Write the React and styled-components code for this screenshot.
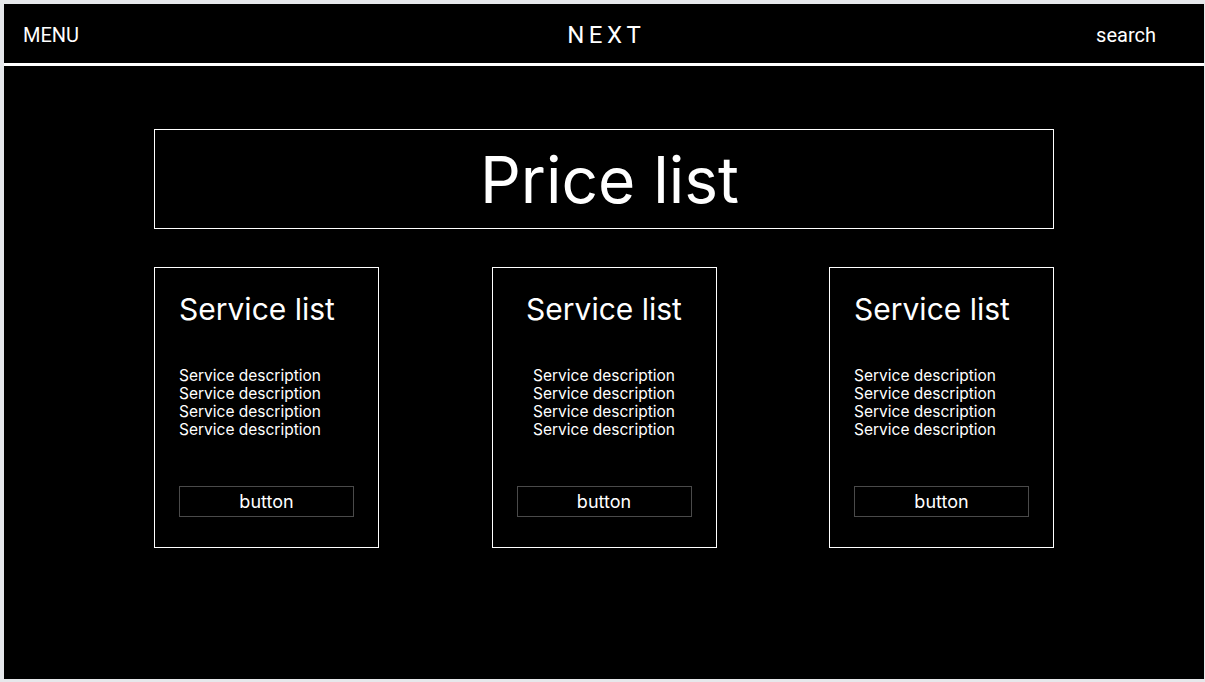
import styled, { createGlobalStyle } from 'styled-components';

const GlobalStyle = createGlobalStyle`
  body {
    margin: 0;
    background: #e6e8eb;
  }
`;

const Frame = styled.div`
  width: 1200px;
  height: 675px;
  margin: 4px 0 0 4px;
  background: #000;
  color: #fff;
  display: flex;
  flex-direction: column;
`;

const Header = styled.header`
  box-sizing: border-box;
  height: 62px;
  border-bottom: 3px solid #fff;
  display: grid;
  grid-template-columns: 1fr auto 1fr;
  align-items: center;
  padding: 3px 19px 0;
  font-family: Roboto, sans-serif;
  font-size: 20px;
`;

const NavLink = styled.a`
  color: #fff;
  text-decoration: none;
  justify-self: ${({ $end }) => ($end ? 'end' : 'start')};
  margin-right: ${({ $end }) => ($end ? '29px' : '0')};
`;

const Logo = styled.div`
  font-size: 24px;
  letter-spacing: 4.5px;
  margin-right: -4.5px;
`;

const Main = styled.main`
  width: 900px;
  margin: 0 auto;
  padding-top: 63px;
  font-family: Inter, sans-serif;
`;

const TitleBox = styled.div`
  height: 98px;
  border: 1px solid #fff;
  padding-left: 11px;
  display: flex;
  align-items: center;
  justify-content: center;
`;

const Title = styled.h1`
  margin: 0;
  font-size: 64px;
  font-weight: 400;
`;

const Cards = styled.div`
  display: flex;
  justify-content: space-between;
  margin-top: 38px;
`;

const Card = styled.div`
  width: 225px;
  height: 281px;
  box-sizing: border-box;
  border: 1px solid #fff;
  padding: 23px 24px 0;
  display: flex;
  flex-direction: column;
  align-items: ${({ $center }) => ($center ? 'center' : 'flex-start')};
  text-align: ${({ $center }) => ($center ? 'center' : 'left')};
`;

const CardTitle = styled.h2`
  margin: 0;
  font-size: 30px;
  line-height: 36px;
  font-weight: 400;
  white-space: nowrap;
`;

const DescList = styled.ul`
  list-style: none;
  margin: 40px 0 0;
  padding: 0;
  font-size: 15.5px;
  line-height: 18px;
`;

const Button = styled.button`
  margin-top: 47px;
  width: 175px;
  height: 31px;
  background: transparent;
  border: 1px solid #4a4a4a;
  color: #fff;
  font-family: Inter, sans-serif;
  font-size: 18px;
  padding: 0;
`;

const cards = [{ center: false }, { center: true }, { center: false }];

export default function App() {
  return (
    <>
      <GlobalStyle />
      <Frame>
        <Header>
          <NavLink href="#">MENU</NavLink>
          <Logo>NEXT</Logo>
          <NavLink href="#" $end>search</NavLink>
        </Header>
        <Main>
          <TitleBox>
            <Title>Price list</Title>
          </TitleBox>
          <Cards>
            {cards.map((card, i) => (
              <Card key={i} $center={card.center}>
                <CardTitle>Service list</CardTitle>
                <DescList>
                  {[0, 1, 2, 3].map((n) => (
                    <li key={n}>Service description</li>
                  ))}
                </DescList>
                <Button>button</Button>
              </Card>
            ))}
          </Cards>
        </Main>
      </Frame>
    </>
  );
}
